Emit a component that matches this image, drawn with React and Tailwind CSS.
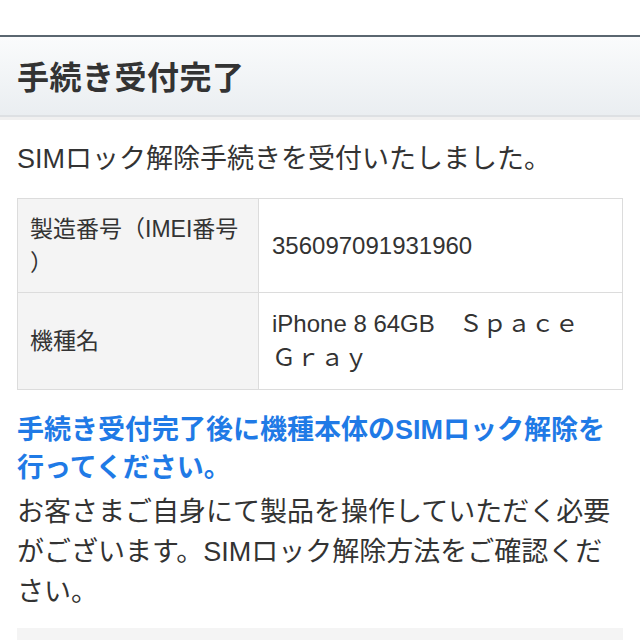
import React from 'react';

const font = { fontFamily: '"Liberation Sans", "Noto Sans CJK JP", sans-serif' };

const Row = ({ label, children, tall }) => (
  <>
    <div className={`bg-[#f4f4f4] border-r border-[#dcdcdc] pl-[12px] flex items-center text-[23px] leading-[34px] text-[#333] whitespace-nowrap ${tall}`}>
      <div>{label}</div>
    </div>
    <div className={`bg-white px-[13px] flex items-center text-[24px] leading-[34px] text-[#333] ${tall}`}>
      <div>{children}</div>
    </div>
  </>
);

export default function App() {
  return (
    <div className="w-[640px] h-[640px] bg-white overflow-hidden" style={font}>
      <div className="h-[35px]" />
      <div className="border-t-2 border-[#5a6670] border-b-2 border-b-[#dde0e3] bg-gradient-to-b from-[#fafbfc] to-[#eaeef1] h-[82px] flex items-center px-[17px] pt-[3px]">
        <h1 className="text-[32px] font-bold text-[#333] tracking-[0.5px]">手続き受付完了</h1>
      </div>
      <div className="h-[3px] bg-[#f0f0f0]" />

      <div className="px-[17px]">
        <p className="mt-[21px] text-[27px] leading-[36px] text-[#333]">
          SIMロック解除手続きを受付いたしました。
        </p>

        <div className="mt-[21px] border border-[#dcdcdc] grid grid-cols-[241px_1fr]">
          <Row label={<>製造番号（IMEI番号<br />）</>} tall="h-[94px] border-b border-b-[#dcdcdc]">
            356097091931960
          </Row>
          <Row label="機種名" tall="h-[96px]">
            iPhone 8 64GB　Ｓｐａｃｅ<br />Ｇｒａｙ
          </Row>
        </div>

        <p className="mt-[21px] text-[27px] leading-[38px] font-bold text-[#1f7ae6]">
          手続き受付完了後に機種本体のSIMロック解除を<br />行ってください。
        </p>
        <p className="mt-[5px] text-[27px] leading-[40px] text-[#333]">
          お客さまご自身にて製品を操作していただく必要<br />がございます。SIMロック解除方法をご確認くだ<br />さい。
        </p>

        <div className="mt-[16px] h-[40px] bg-[#f4f4f4]" />
      </div>
    </div>
  );
}
